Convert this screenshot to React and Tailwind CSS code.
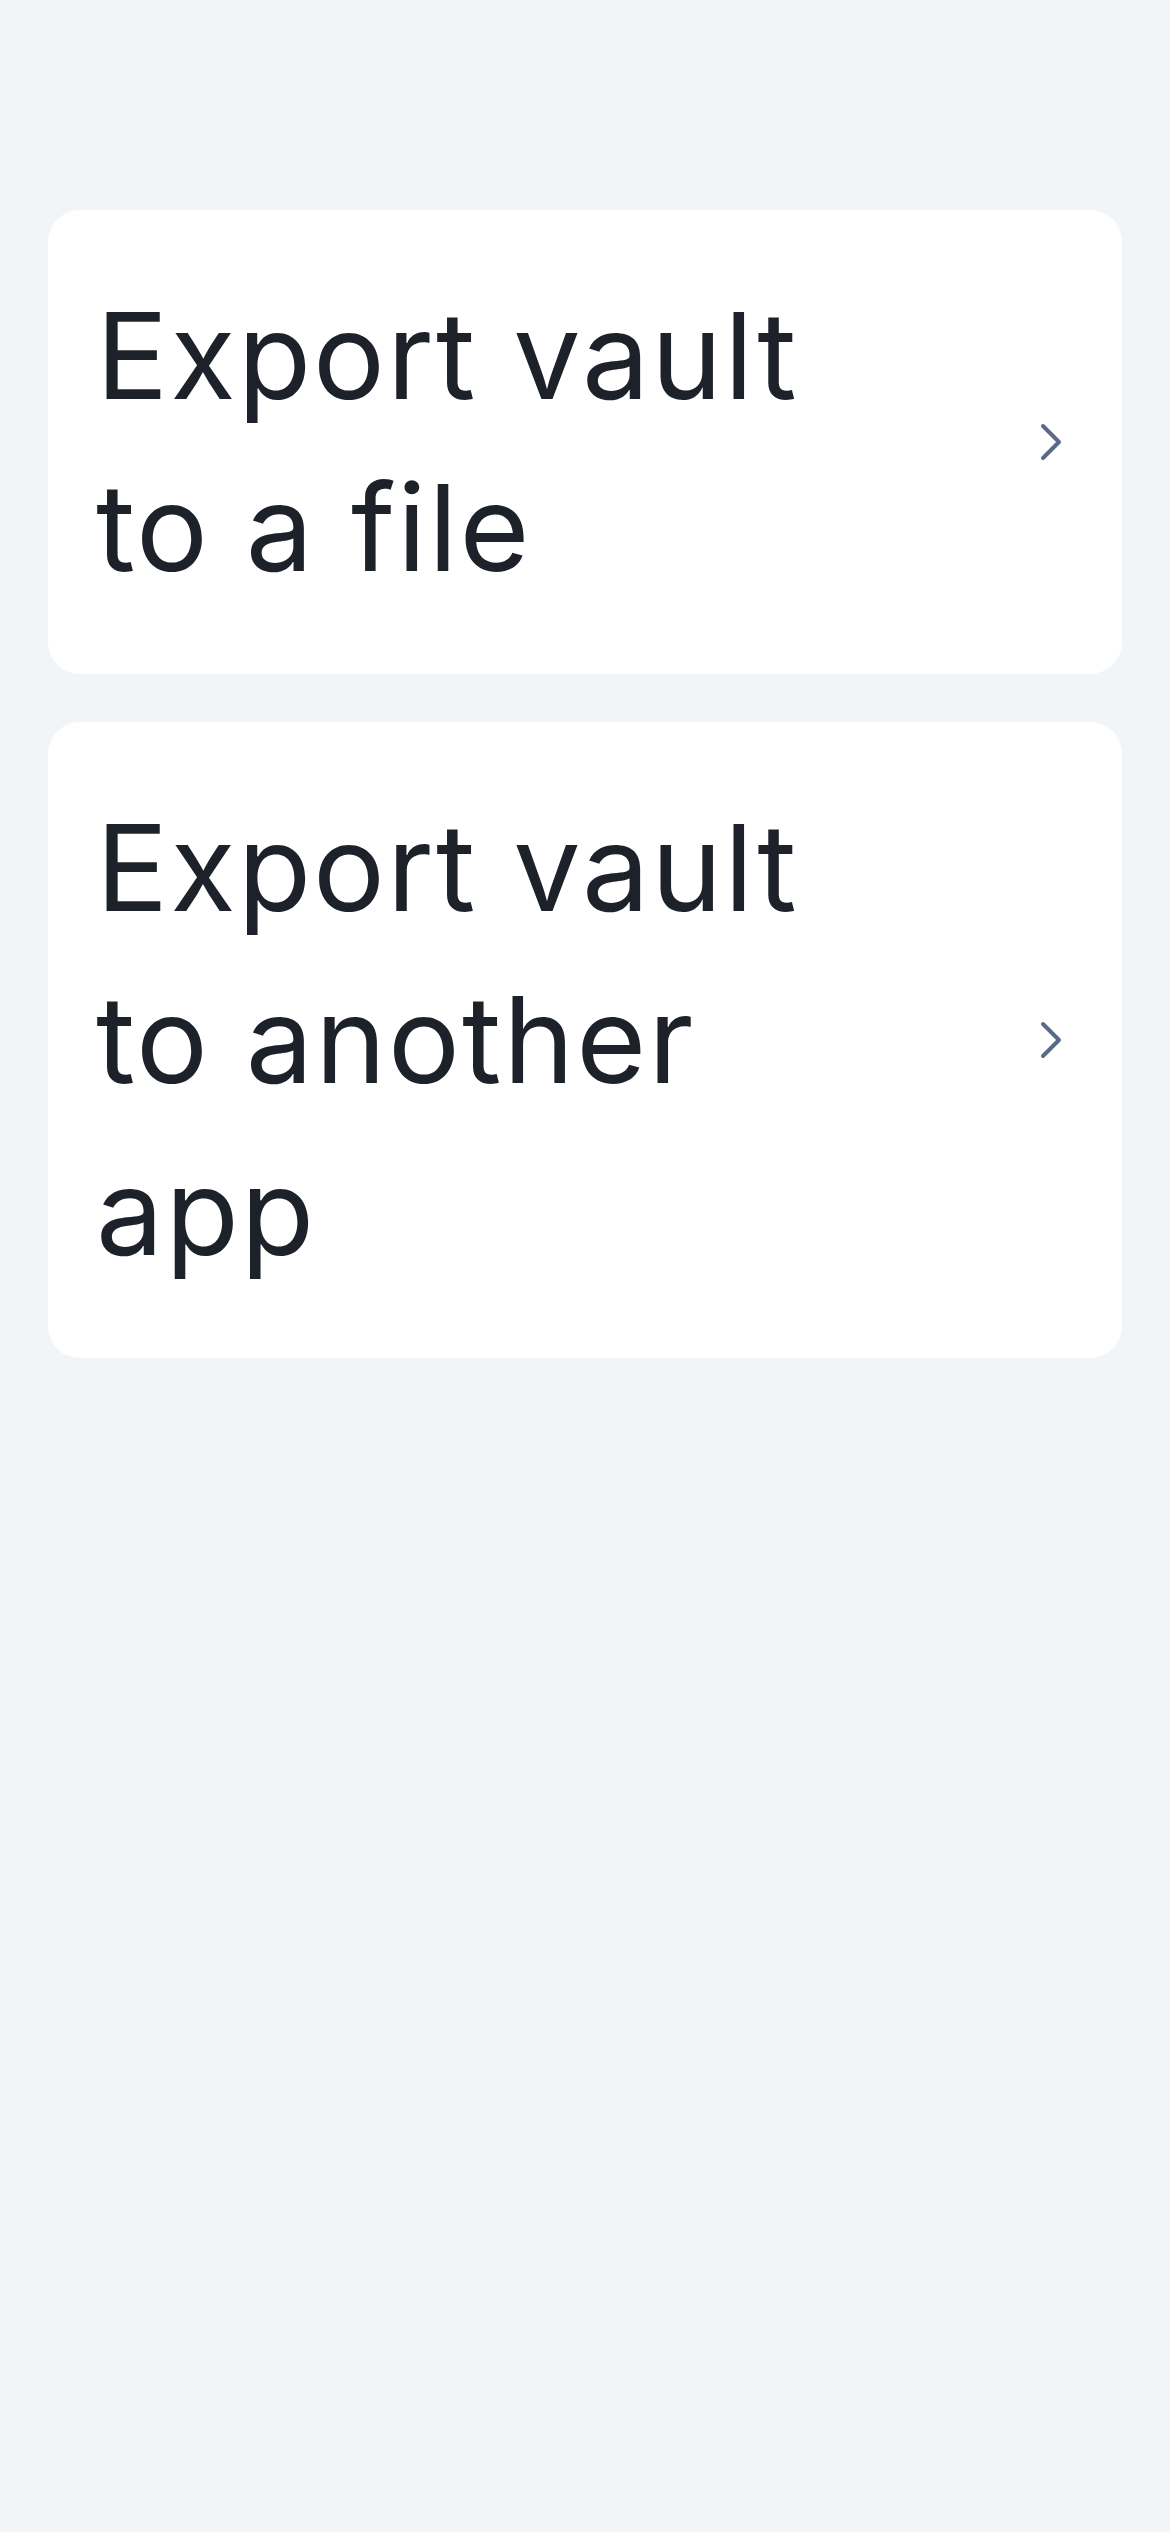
import React from 'react';

const items = ['Export vault to a file', 'Export vault to another app'];

const Chevron = () => (
  <svg width="24" height="38" viewBox="0 0 24 38" fill="none" className="shrink-0">
    <path d="M3 3 L19 19 L3 35" stroke="#5b6a8a" strokeWidth="4" strokeLinecap="round" strokeLinejoin="round" />
  </svg>
);

export default function App() {
  return (
    <div className="min-h-screen bg-[#f2f5f8] px-12 pt-[210px]" style={{ fontFamily: 'Inter, "Noto Sans", sans-serif' }}>
      <div className="flex flex-col gap-[48px]">
        {items.map((label) => (
          <button
            key={label}
            className="flex items-center gap-[130px] rounded-[32px] bg-white py-[60px] pl-[48px] pr-[58px] text-left"
          >
            <span className="flex-1 text-[120px] leading-[172px] tracking-[2px] text-[#1d2129]">{label}</span>
            <Chevron />
          </button>
        ))}
      </div>
    </div>
  );
}
